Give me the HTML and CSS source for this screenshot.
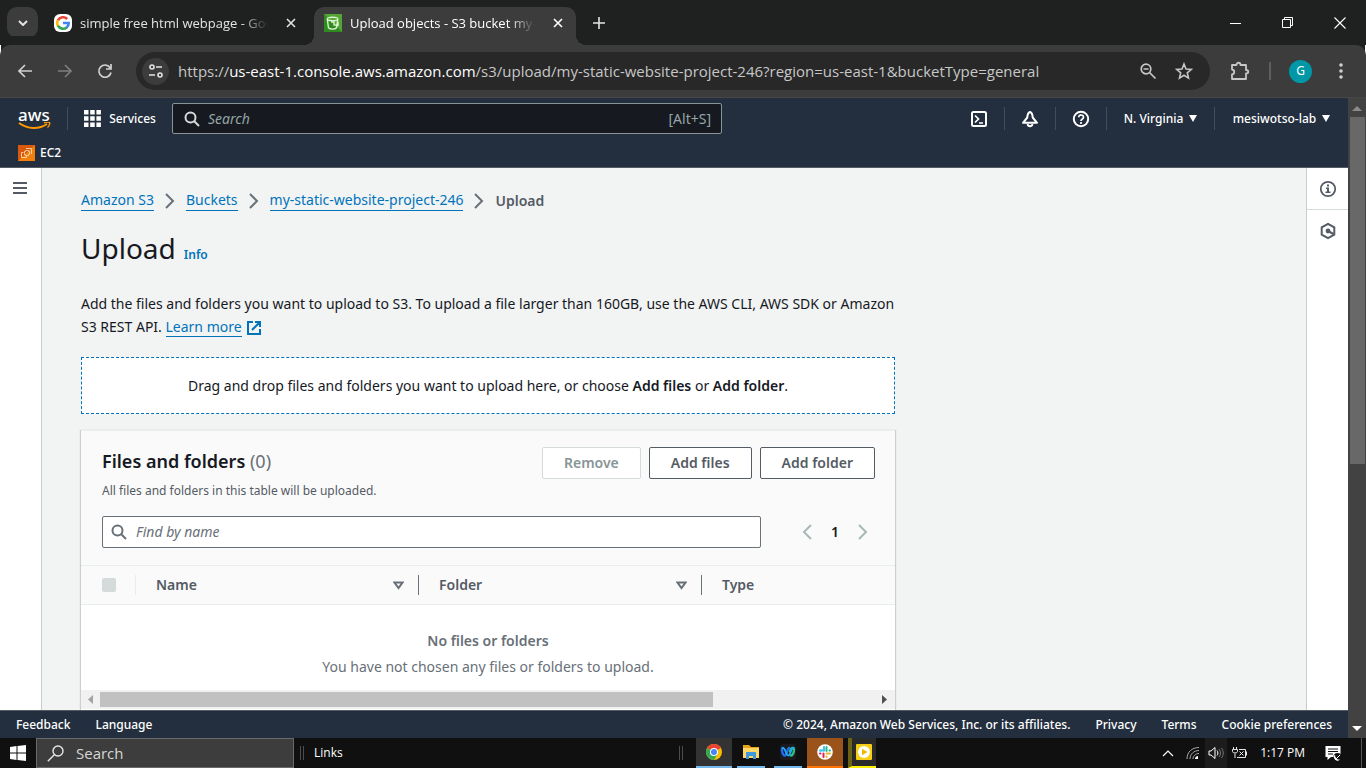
FILE: index.html
```html
<!DOCTYPE html>
<html lang="en">
<head>
<meta charset="utf-8">
<title>Upload objects - S3 bucket my-static-website-project-246</title>
<link rel="stylesheet" href="styles.css">
</head>
<body>
<div class="tabstrip">
  <button class="tab-search" aria-label="Search tabs"><svg width="10" height="6" viewBox="0 0 10 6"><path d="M1 1l4 4 4-4" fill="none" stroke="#e3e3e3" stroke-width="2"/></svg></button>
  <div class="tab">
    <svg width="18" height="18" viewBox="0 0 18 18"><rect width="18" height="18" rx="6" fill="#fff"/><g fill="none" stroke-width="2.6"><path d="M13.200 5A5.800 5.800 0 0 0 3.900 6.300" stroke="#ea4335"/><path d="M3.900 6.200a5.800 5.800 0 0 0 0 5.600" stroke="#fbbc05"/><path d="M3.900 11.700a5.800 5.800 0 0 0 9 1.500" stroke="#34a853"/><path d="M12.700 13.400A5.600 5.600 0 0 0 14.700 9H9" stroke="#4285f4"/></g></svg>
    <span class="tab-title">simple free html webpage - Goo</span>
    <button class="tab-close" aria-label="Close tab"><svg width="10" height="10" viewBox="0 0 10 10"><path d="M1 1l8 8M9 1L1 9" stroke="#e3e3e3" stroke-width="1.6"/></svg></button>
  </div>
  <div class="tab tab-active">
    <svg width="18" height="18" viewBox="0 0 18 18"><path fill="#2f8a1f" d="M0 0h18v18H0z"/><path d="M18 0v18L0 0z" fill="#54a436"/><g fill="none" stroke="#d9f2cf" stroke-width="1.4"><ellipse cx="8.500" cy="5" rx="5.300" ry="1.800"/><path d="M3.300 5.500l1.200 8.300c1.600 1.800 6.600 1.800 8 0L13.800 5.500M7 8h3v3l4 .5M14 8v4"/></g></svg>
    <span class="tab-title">Upload objects - S3 bucket my-</span>
    <button class="tab-close" aria-label="Close tab"><svg width="10" height="10" viewBox="0 0 10 10"><path d="M1 1l8 8M9 1L1 9" stroke="#fff" stroke-width="1.6"/></svg></button>
  </div>
  <button class="new-tab" aria-label="New tab"><svg width="12" height="12" viewBox="0 0 12 12"><path d="M6 0v12M0 6h12" stroke="#e3e3e3" stroke-width="1.6"/></svg></button>
  <div class="window-controls">
    <button aria-label="Minimize"><svg width="12" height="12" viewBox="0 0 12 12"><path d="M0 6.500h11" stroke="#fff"/></svg></button>
    <button aria-label="Restore"><svg width="12" height="12" viewBox="0 0 12 12"><path d="M.5 2.500h8v8h-8zM2.500 2.500v-2h8v8h-2" fill="none" stroke="#fff"/></svg></button>
    <button aria-label="Close"><svg width="12" height="12" viewBox="0 0 12 12"><path d="M.5.500l11 11M11.500.500l-11 11" stroke="#fff" stroke-width="1.1"/></svg></button>
  </div>
</div>

<div class="toolbar">
  <button class="tool" aria-label="Back"><svg width="16" height="16" viewBox="0 0 16 16"><path d="M8 2L2 8l6 6M2 8h13" fill="none" stroke="#d0d0d0" stroke-width="1.7"/></svg></button>
  <button class="tool" aria-label="Forward"><svg width="16" height="16" viewBox="0 0 16 16"><path d="M8 2l6 6-6 6M14 8H1" fill="none" stroke="#7d7d7d" stroke-width="1.7"/></svg></button>
  <button class="tool" aria-label="Reload"><svg width="16" height="16" viewBox="0 0 16 16"><path d="M13.300 5A6.100 6.100 0 1 0 14 9.500M14 1v5H9" fill="none" stroke="#d0d0d0" stroke-width="1.7"/></svg></button>
  <div class="omnibox">
    <button class="site-info" aria-label="Site information"><svg width="16" height="14" viewBox="0 0 16 14"><g fill="none" stroke="#e3e3e3" stroke-width="1.6"><circle cx="4" cy="3" r="2"/><path d="M8 3h6M1 11h6"/><circle cx="12" cy="11" r="2"/></g></svg></button>
    <div class="url">https://<b>us-east-1.console.aws.amazon.com</b>/s3/upload/my-static-website-project-246?region=us-east-1&amp;bucketType=general</div>
    <button aria-label="Zoom"><svg width="18" height="18" viewBox="0 0 18 18"><g fill="none" stroke="#c7c7c7" stroke-width="1.7"><circle cx="7" cy="7" r="4.800"/><path d="M10.500 10.500l6 6M4.500 7h5"/></g></svg></button>
    <button aria-label="Bookmark this tab"><svg width="18" height="18" viewBox="0 0 18 18"><path d="M9 2l2 5 5.300.400-4 3.500 1.200 5.200L9 13.300l-4.500 2.800 1.200-5.200-4-3.500L7 7z" fill="none" stroke="#c7c7c7" stroke-width="1.600"/></svg></button>
  </div>
  <button class="tool extensions" aria-label="Extensions"><svg width="20" height="20" viewBox="0 0 20 20"><path d="M2 4h4.500c0-3 4-3 4 0H16v5c3 0 3 3.500 0 3.500V18H2v-4.500c3-.500 3-4.500 0-5z" fill="none" stroke="#c7c7c7" stroke-width="1.800" stroke-linejoin="round"/></svg></button>
  <span class="tool-rule"></span>
  <button class="avatar" aria-label="Profile">G</button>
  <button class="kebab" aria-label="Chrome menu"><svg width="4" height="16" viewBox="0 0 4 16"><g fill="#d0d0d0"><circle cx="2" cy="2" r="1.800"/><circle cx="2" cy="8" r="1.800"/><circle cx="2" cy="14" r="1.800"/></g></svg></button>
</div>

<div class="viewport">
  <div class="page">
    <header class="aws-nav">
      <div class="nav-row">
        <a class="aws-logo" href="#" aria-label="AWS"><span>aws</span><svg width="34" height="8" viewBox="0 0 34 8"><path d="M1 1c9 6.500 20 6.500 28 1" fill="none" stroke="#ff9900" stroke-width="2"/><path d="M26 .800c3-1 5-.800 5.500-.300.500.600 0 3.500-2 5" fill="none" stroke="#ff9900" stroke-width="1.400"/></svg></a>
        <button class="services"><svg width="17" height="17" viewBox="0 0 17 17"><path fill="#fff" d="M0 0h4.500v4.500H0zM6.200 0h4.500v4.500H6.200zM12.400 0h4.500v4.500h-4.500zM0 6.200h4.500v4.500H0zM6.200 6.200h4.500v4.500H6.200zM12.400 6.200h4.500v4.500h-4.500zM0 12.400h4.500v4.500H0zM6.200 12.400h4.500v4.500H6.200zM12.400 12.400h4.500v4.500h-4.500z"/></svg>Services</button>
        <label class="nav-search"><svg width="16" height="16" viewBox="0 0 16 16"><g fill="none" stroke="#d5dbdb" stroke-width="2"><circle cx="6.500" cy="6.500" r="5"/><path d="M10 10l5 5"/></g></svg><input type="text" placeholder="Search" aria-label="Search"><span>[Alt+S]</span></label>
        <div class="nav-tools">
          <button class="nav-icon" aria-label="CloudShell"><svg width="18" height="18" viewBox="0 0 18 18"><g fill="none" stroke="#fff" stroke-width="2"><rect x="2" y="2" width="14" height="14" rx="1.500"/><path d="M5 5.500L8.500 9 5 12.500M9 13h4" stroke-width="1.700"/></g></svg></button>
          <button class="nav-icon" aria-label="Notifications"><svg width="18" height="18" viewBox="0 0 18 18"><path d="M9 2C7.500 2.500 6.500 4 6.300 7.500L2 12.800h14L11.700 7.500C11.500 4 10.500 2.500 9 2z" fill="none" stroke="#fff" stroke-width="2" stroke-linejoin="round"/><path d="M6.500 14c.500 3 4.500 3 5 0" fill="none" stroke="#fff" stroke-width="1.800"/></svg></button>
          <button class="nav-icon" aria-label="Help"><svg width="18" height="18" viewBox="0 0 18 18"><g fill="none" stroke="#fff" stroke-width="2"><circle cx="9" cy="9" r="7.200"/><path d="M6.700 7.300c0-3.200 4.800-3 4.800 0C11.500 9 9 9 9 11M9 12v2" stroke-width="1.700"/></g></svg></button>
          <button class="nav-menu region">N. Virginia<svg width="8" height="7" viewBox="0 0 8 7"><path d="M0 0h8L4 7z" fill="#fff"/></svg></button>
          <button class="nav-menu account">mesiwotso-lab<svg width="8" height="7" viewBox="0 0 8 7"><path d="M0 0h8L4 7z" fill="#fff"/></svg></button>
        </div>
      </div>
      <a class="favorite" href="#"><svg width="17" height="16" viewBox="0 0 17 16"><path fill="#d8590d" d="M0 0h17v16H0z"/><path fill="#f07f0c" d="M17 0v16L0 16z"/><g fill="none" stroke="#ffe4c4"><rect x="6.500" y="5.500" width="5" height="5" rx="2"/><path d="M5.500 7.500h-2v5h5v-1.500M8 3.500h5.500V9" stroke-width=".8"/></g></svg>EC2</a>
    </header>

    <div class="workspace">
      <aside class="rail-left"><button aria-label="Open navigation"><svg width="15" height="13" viewBox="0 0 15 13"><path d="M0 1h14M0 6h14M0 11h14" stroke="#545b64" stroke-width="2"/></svg></button></aside>
      <main class="content">
        <div class="column">
          <nav class="breadcrumbs" aria-label="Breadcrumbs">
            <a href="#">Amazon S3</a><svg width="10" height="16" viewBox="0 0 10 16"><path d="M1 1l7 7-7 7" fill="none" stroke="#687078" stroke-width="2"/></svg>
            <a href="#">Buckets</a><svg width="10" height="16" viewBox="0 0 10 16"><path d="M1 1l7 7-7 7" fill="none" stroke="#687078" stroke-width="2"/></svg>
            <a href="#">my-static-website-project-246</a><svg width="10" height="16" viewBox="0 0 10 16"><path d="M1 1l7 7-7 7" fill="none" stroke="#687078" stroke-width="2"/></svg>
            <span>Upload</span>
          </nav>
          <div class="title"><h1>Upload</h1><a href="#">Info</a></div>
          <p class="intro">Add the files and folders you want to upload to S3. To upload a file larger than 160GB, use the AWS CLI, AWS SDK or Amazon S3 REST API. <a href="#"><span>Learn more</span><svg width="16" height="16" viewBox="0 0 16 16"><path d="M7 2H2v12h12V9M9 2h5v5M14 2L6 10" fill="none" stroke="#0073bb" stroke-width="2"/></svg></a></p>
          <div class="dropzone">Drag and drop files and folders you want to upload here, or choose <b>Add files</b> or <b>Add folder</b>.</div>

          <section class="panel">
            <div class="panel-head">
              <div class="panel-title">
                <div>
                  <h2>Files and folders <span>(0)</span></h2>
                  <p>All files and folders in this table will be uploaded.</p>
                </div>
                <div class="actions">
                  <button disabled>Remove</button><button>Add files</button><button>Add folder</button>
                </div>
              </div>
              <div class="filter-row">
                <label class="filter"><svg width="16" height="16" viewBox="0 0 16 16"><g fill="none" stroke="#687078" stroke-width="2"><circle cx="6.500" cy="6.500" r="5"/><path d="M10 10l5 5"/></g></svg><input type="text" placeholder="Find by name" aria-label="Find by name"></label>
                <div class="pager">
                  <button aria-label="Previous page"><svg width="10" height="16" viewBox="0 0 10 16"><path d="M9 1L2 8l7 7" fill="none" stroke="#aab7b8" stroke-width="2"/></svg></button>
                  <button class="current">1</button>
                  <button aria-label="Next page"><svg width="10" height="16" viewBox="0 0 10 16"><path d="M1 1l7 7-7 7" fill="none" stroke="#aab7b8" stroke-width="2"/></svg></button>
                </div>
              </div>
            </div>
            <table>
              <thead><tr>
                <th class="select-col"><div><input type="checkbox" disabled aria-label="Select all"></div></th>
                <th class="sort-col"><div>Name<svg width="11" height="9" viewBox="0 0 11 9"><path d="M1.500 1.500h8l-4 5.500z" fill="none" stroke="#687078" stroke-width="2"/></svg></div></th>
                <th class="sort-col"><div>Folder<svg width="11" height="9" viewBox="0 0 11 9"><path d="M1.500 1.500h8l-4 5.500z" fill="none" stroke="#687078" stroke-width="2"/></svg></div></th>
                <th><div>Type</div></th>
              </tr></thead>
              <tbody><tr><td colspan="4"><b>No files or folders</b><p>You have not chosen any files or folders to upload.</p></td></tr></tbody>
            </table>
            <div class="hscroll"><svg width="6" height="9" viewBox="0 0 6 9"><path d="M5 0v9L0 4.500z" fill="#a3a3a3"/></svg><div class="hscroll-track"><div class="hscroll-thumb"></div></div><svg width="6" height="9" viewBox="0 0 6 9"><path d="M0 0v9l5-4.500z" fill="#505050"/></svg></div>
          </section>
        </div>
      </main>
      <aside class="rail-right">
        <button aria-label="Info panel"><svg width="18" height="18" viewBox="0 0 18 18"><circle cx="9" cy="9" r="7.200" fill="none" stroke="#545b64" stroke-width="1.800"/><path d="M8 4.500h2v2H8zM7 7.500h3v4h1.500V13h-5v-1.500H8V9H7z" fill="#545b64"/></svg></button>
        <button aria-label="Tutorials"><svg width="18" height="18" viewBox="0 0 18 18"><path d="M9 1.800l6.300 3.500v7.400L9 16.200l-6.300-3.500V5.300z" fill="none" stroke="#545b64" stroke-width="2"/><circle cx="9" cy="9" r="2.400" fill="#545b64"/><path d="M9 9l5.500 3" stroke="#545b64" stroke-width="2"/></svg></button>
      </aside>
    </div>

    <footer class="aws-footer">
      <a href="#">Feedback</a><a href="#">Language</a>
      <span class="copyright">© 2024, Amazon Web Services, Inc. or its affiliates.</span>
      <a href="#">Privacy</a><a href="#">Terms</a><a href="#">Cookie preferences</a>
    </footer>
  </div>
  <div class="vscroll"><svg width="10" height="6" viewBox="0 0 10 6"><path d="M0 5l5-5 5 5z" fill="#8b8b8b"/></svg><div class="vscroll-track"><div class="vscroll-thumb"></div></div><svg width="10" height="6" viewBox="0 0 10 6"><path d="M0 0l5 5 5-5z" fill="#fff"/></svg></div>
</div>

<div class="taskbar">
  <button class="start" aria-label="Start"><svg width="16" height="16" viewBox="0 0 16 16"><path fill="#fff" d="M0 2l6.500-1v6.500H0zM7.500.900L16 0v7.500H7.500zM0 8.500h6.500V15L0 14zM7.500 8.500H16V16l-8.500-1z"/></svg></button>
  <label class="task-search"><svg width="17" height="17" viewBox="0 0 17 17"><g fill="none" stroke="#e6e6e6" stroke-width="1.400"><circle cx="11" cy="6" r="5"/><path d="M7.300 9.700L.800 16.200"/></g></svg><input type="text" placeholder="Search" aria-label="Search Windows"></label>
  <span class="grip"></span><span class="links">Links</span>
  <span class="grip grip-apps"></span>
  <div class="apps">
    <button class="app app-open" aria-label="Google Chrome"><svg width="16" height="16" viewBox="0 0 16 16"><circle cx="8" cy="8" r="8" fill="#fbbc05"/><path d="M8 8L1.100 4A8 8 0 0 1 14.900 4z" fill="#ea4335"/><path d="M8 8L1.100 4A8 8 0 0 0 8 16l3.500-6z" fill="#34a853"/><circle cx="8" cy="8" r="4" fill="#fff"/><circle cx="8" cy="8" r="3" fill="#4285f4"/></svg></button>
    <button class="app" aria-label="File Explorer"><svg width="16" height="16" viewBox="0 0 16 16"><path d="M0 1h6l2 2h8v11H0z" fill="#e8a317"/><path d="M0 4h16v10H0z" fill="#ffd766"/><path d="M3 8h10v7h-3v-3H6v3H3z" fill="#3f97dd"/></svg></button>
    <button class="app" aria-label="Webex"><svg width="16" height="16" viewBox="0 0 16 16"><rect width="16" height="16" rx="3" fill="#1b1b1f"/><g fill="none" stroke-width="2.400" stroke-linecap="round"><path d="M11 11.500c2.500 0 4-7 2-7.500-2-.500-2.500 1.500-3 3.500" stroke="#2ebd85"/><path d="M2.500 4C1 6 3 12 5 11.500s2.500-7.500 4-7.500" stroke="#1f6df2"/><path d="M2.500 4c3-1 3 7.500 6 7.500 2.500 0 2-7.500 5-7.500" stroke="#22a8ee" stroke-width="1.800"/></g></svg></button>
    <button class="app app-slack" aria-label="Slack"><svg width="16" height="16" viewBox="0 0 16 16"><circle cx="8" cy="8" r="7.800" fill="#fff"/><g stroke-width="2" stroke-linecap="round"><path d="M7 3v3.500M3.500 6.500H4" stroke="#36c5f0"/><path d="M3 6.500h4" stroke="#36c5f0"/><path d="M9.500 3v4M12.500 6.500h.500" stroke="#2eb67d"/><path d="M9.500 9.500h3.500M9.500 12.500v.500" stroke="#ecb22e"/><path d="M6.500 9.500V13M3 9.500h.500" stroke="#e01e5a"/></g></svg></button>
    <button class="app app-player" aria-label="Media player"><svg width="16" height="16" viewBox="0 0 16 16"><rect width="16" height="16" rx="1" fill="#f6cf13"/><circle cx="8" cy="8" r="6" fill="#fff"/><path d="M6 4.800L11.500 8 6 11.200z" fill="#e9bc00"/></svg></button>
  </div>
  <div class="tray">
    <button aria-label="Show hidden icons"><svg width="12" height="8" viewBox="0 0 12 8"><path d="M1 7l5-5 5 5" fill="none" stroke="#fff" stroke-width="1.200"/></svg></button>
    <button aria-label="Network"><svg width="14" height="14" viewBox="0 0 14 14"><g fill="none" stroke="#aaa"><path d="M1 13C1 6 6 1.500 13 1.500M4 13c0-5 4-8.500 9-8.500M7 13c0-3 2.500-5.500 6-5.500" /></g><path d="M9 13c0-1.800 1.500-3 3-3v3z" fill="#fff"/></svg></button>
    <button class="volume" aria-label="Volume"><svg width="16" height="14" viewBox="0 0 16 14"><path d="M1 5h2l4-3.500v11L3 9H1z" fill="none" stroke="#fff"/><path d="M9 4.500c1.200 1.500 1.200 3.500 0 5" fill="none" stroke="#fff"/><path d="M11 3c2 2.500 2 5.500 0 8M13.500 2c2.300 3 2.300 7 0 10" fill="none" stroke="#777"/></svg></button>
    <button aria-label="Power"><svg width="16" height="14" viewBox="0 0 16 14"><g fill="none" stroke="#e6e6e6"><path d="M1.500 1v2M4.500 1v2M.500 3.500h5v2c0 2-5 2-5 0zM3 7.500V12M5 11.500h8.500v-8H7M14.500 5.500v4M7.500 5.500l4 4M11.500 5.500l-4 4"/></g></svg></button>
    <span class="clock">1:17 PM</span>
    <button aria-label="Notifications"><svg width="17" height="17" viewBox="0 0 17 17"><path d="M.500 1h15v11H6l-3.500 3v-3h-2z" fill="#fff"/><path d="M3 4h10M3 6.500h10M3 9h5" stroke="#111"/><circle cx="12.500" cy="12" r="4" fill="#111"/><path d="M10 9.500a3.500 3.500 0 1 0 5 5c-3 .500-5-2-5-5z" fill="#fff"/><path d="M10 15l5-5" stroke="#fff"/></svg></button>
    <span class="desktop-edge"></span>
  </div>
</div>
</body>
</html>
```
FILE: styles.css
```css
*{box-sizing:border-box}
body{margin:0;height:100vh;display:flex;flex-direction:column;overflow:hidden;font-family:"Noto Sans","Open Sans",sans-serif;font-size:14px;line-height:20px;color:#16191f}
button{border:0;padding:0;margin:0;background:none;font:inherit;color:inherit;display:flex;align-items:center;justify-content:center}
input{font:inherit;margin:0}
svg{display:block;flex:none}
a{color:#0073bb}
h1,h2,p{margin:0;font-weight:400}

.tabstrip{flex:none;height:45px;display:flex;align-items:stretch;background:#1f2120;color:#e3e3e3;font-family:"Open Sans",sans-serif;font-size:13px;padding-left:7px}
.tab-search{width:31px;height:31px;margin:7px 6px 0 0;border-radius:10px;background:#3c3c3c}
.tab{flex:0 1 262px;display:flex;align-items:center;padding:0 4px 6px 10px;gap:8px;min-width:0;margin:7px 0 0}
.tab-title{flex:1;min-width:0;overflow:hidden;white-space:nowrap;-webkit-mask-image:linear-gradient(90deg,#000 84%,transparent 98%);mask-image:linear-gradient(90deg,#000 84%,transparent 98%)}
.tab-close{width:22px;height:24px}
.tab-active{position:relative;margin-left:8px;padding-right:7px;background:#3c3c3c;border-radius:10px 10px 0 0;color:#fff}
.tab-active::before,.tab-active::after{content:"";position:absolute;bottom:0;width:10px;height:10px}
.tab-active::before{left:-10px;background:radial-gradient(circle at 0 0,transparent 10px,#3c3c3c 10px)}
.tab-active::after{right:-10px;background:radial-gradient(circle at 100% 0,transparent 10px,#3c3c3c 10px)}
.new-tab{width:46px}
.window-controls{margin-left:auto;display:flex}
.window-controls button{width:52px}

.toolbar{flex:none;height:53px;display:flex;align-items:center;background:#3c3c3c;border-bottom:1px solid #474747;border-radius:10px 10px 0 0;padding:0 23px 0 5px;box-shadow:0 -10px 0 -1px #1f2120}
.tool{width:40px;height:36px}
.omnibox{flex:1;min-width:0;height:38px;margin-left:11px;display:flex;align-items:center;border-radius:19px;background:#282828;padding:0 8px 0 6px}
.omnibox>button{width:36px;height:32px}
.omnibox>.site-info{width:27px;height:27px;border-radius:50%;background:#3c3c3c}
.url{flex:1;min-width:0;margin-left:9px;overflow:hidden;white-space:nowrap;font-family:"Open Sans",sans-serif;font-size:15px;color:#c7c7c7}
.url b{font-weight:400;color:#fff}
.extensions{margin-left:10px}
.tool-rule{width:2px;height:18px;margin-left:9px;background:#5e5e5e}
.avatar{width:23px;height:23px;margin-left:18px;border-radius:50%;background:#0097a7;color:#fff;font-size:12px}
.kebab{margin-left:27px}

.viewport{flex:1;min-height:0;display:flex}
.page{flex:1;min-width:0;display:flex;flex-direction:column}
.aws-nav{flex:none;height:70px;background:#232f3e;border-bottom:1px solid #545b64;color:#fff;font-weight:500;font-size:12px}
.nav-row{display:flex;height:41px;align-items:center}
.aws-logo{width:68px;height:23px;padding-left:18px;border-right:1px solid #414d5c;color:#fff;text-decoration:none;font-size:17px;line-height:14px;display:flex;flex-direction:column;justify-content:center}
.services{width:104px;gap:8px}
.nav-search{flex:0 1 550px;min-width:0;height:31px;display:flex;align-items:center;background:#16191f;border:1px solid #879596;border-radius:2px;padding:0 10px 0 11px;gap:8px;font-size:14px;font-weight:400;color:#95a5a6}
.nav-search input{flex:1;min-width:0;padding:0;border:0;outline:0;background:none;color:#fff}
.nav-search input::placeholder{font-style:italic;color:#95a5a6}
.nav-tools{margin-left:auto;display:flex}
.nav-tools button{height:23px}
.nav-tools button+button{border-left:1px solid #414d5c}
.nav-icon{width:51px}
.nav-menu{gap:6px}
.region{width:108px}
.account{width:134px}
.favorite{display:inline-flex;align-items:center;gap:5px;height:28px;padding-left:18px;color:#fff;text-decoration:none}

.workspace{flex:1;min-height:0;display:flex}
.rail-left{flex:none;width:42px;background:#fff;border-right:1px solid #c4cccc}
.rail-left button{width:41px;height:41px}
.content{flex:1;min-width:0;overflow:hidden;background:#f2f3f3;padding:22px 39px 0}
.column{max-width:814px}
.breadcrumbs{display:flex;align-items:center;gap:11px;height:21px}
.breadcrumbs a,.intro a span{text-decoration:none;border-bottom:1px solid #0073bb}
.breadcrumbs span{color:#545b64;font-weight:600}
.title{display:flex;align-items:baseline;gap:8px;margin-top:17px}
.title h1{font-size:28px;line-height:40px}
.title a{font-size:12px;font-weight:600;text-decoration:none}
.intro{margin-top:24px;line-height:23px}
.intro a{display:inline-flex;align-items:center;gap:4px;line-height:18px;text-decoration:none}
.dropzone{margin-top:19px;border:1px dashed #0073bb;background:#fff;height:57px;display:flex;align-items:center;justify-content:center;white-space:pre-wrap}
.dropzone b,.panel b{font-weight:600}
.panel{margin-top:16px;background:#fff;border-top:1px solid #eaeded;box-shadow:0 1px 1px 1px #c9d0d0}
.panel-head{background:#fafafa;padding:16px 20px 17px 21px}
.panel-title{display:flex;justify-content:space-between;align-items:flex-start}
.panel h2{font-size:18px;line-height:28px;font-weight:600}
.panel h2 span{font-weight:400;color:#687078}
.panel-title p{font-size:12px;line-height:18px;margin-top:7px;color:#545b64}
.actions{display:flex;gap:8px}
.actions button{height:32px;padding:0 21px;border:1px solid #545b64;border-radius:2px;background:#fff;color:#545b64;font-weight:600}
.actions button:disabled{border-color:#d5dbdb;color:#879596}
.filter-row{display:flex;align-items:center;justify-content:space-between;margin-top:16px}
.filter{flex:0 1 659px;min-width:0;display:flex;align-items:center;height:32px;gap:9px;padding:0 8px;border:1px solid #687078;border-radius:2px;background:#fff}
.filter input{flex:1;min-width:0;padding:0;border:0;outline:0;background:none}
.filter input::placeholder{font-style:italic;color:#687078}
.pager{display:flex;align-items:center}
.pager button{width:24px;height:32px}
.pager .current{width:32px;font-weight:600}
table{width:100%;table-layout:fixed;border-collapse:collapse}
th{height:39px;padding:0;background:#fafafa;border-top:1px solid #eaeded;border-bottom:1px solid #eaeded;color:#545b64;font-weight:600;text-align:left}
th>div{display:flex;align-items:center;justify-content:space-between;height:20px;padding-left:20px}
.select-col{width:55px}
.select-col>div{padding-left:21px;border-right:1px solid #eaeded}
.sort-col{width:283px}
.sort-col>div{padding-right:14px;border-right:1px solid #687078}
th input{appearance:none;width:14px;height:14px;border-radius:2px;background:#d5dbdb}
td{padding:26px 20px 13px;text-align:center;color:#687078}
td p{line-height:20px;margin-top:6px}
.hscroll{display:flex;align-items:center;height:20px;padding:0 7px;background:#f1f1f1;gap:6px;border-bottom:1px solid #fff}
.hscroll-track{flex:1}
.hscroll-thumb{width:79%;height:15px;background:#c1c1c1}
.rail-right{flex:none;width:42px;background:#fff;border-left:1px solid #c4cccc}
.rail-right button{width:41px;height:42px}
.rail-right button:first-child{border-bottom:1px solid #d5dbdb}
.aws-footer{flex:none;height:28px;display:flex;align-items:center;gap:25px;padding:0 16px;background:#232f3e;border-top:1px solid #545b64;color:#fff;font-size:12px;font-weight:500;white-space:nowrap}
.aws-footer a{color:#fff;text-decoration:none}
.copyright{margin-left:auto}
.vscroll{flex:none;width:18px;background:#424242;display:flex;flex-direction:column;align-items:center;padding:8px 0 6px;gap:5px}
.vscroll-track{flex:1;width:15px}
.vscroll-thumb{height:57.5%;background:#686868}

.taskbar{flex:none;height:30px;display:flex;align-items:stretch;background:#101010;color:#fff;font-family:"Open Sans",sans-serif;font-size:12px}
.start{width:36px}
.task-search{width:258px;display:flex;align-items:center;gap:10px;padding:0 10px;background:#3d3d3d;border:1px solid #6a6a6a;font-size:15px}
.task-search input{width:100%;min-width:0;border:0;outline:0;background:none;color:#fff}
.task-search input::placeholder{color:#d6d6d6}
.grip{width:4px;height:14px;margin:8px 0 0 6px;border:solid #4c4c4c;border-width:0 1px}
.links{margin-left:10px;line-height:30px}
.grip-apps{margin-left:auto;margin-right:13px}
.apps{display:flex}
.app{width:28px;margin-right:9px;border-bottom:2px solid #76b9ed}
.app:nth-child(3){margin-right:5px}
.app-open{width:36px;margin-right:5px;background:#333}
.app-slack{width:36px;margin-right:5px;background:#9a531b;border-color:#ff7300}
.app-player{margin-right:0;background:#2a2a2a;border-bottom-color:#fff100;border-left:4px solid #6b6313}
.tray{display:flex;align-items:center;margin-left:279px}
.tray button{width:25px;height:30px}
.tray .volume{width:22px;background:#1c1c1c}
.clock{margin:0 16px 0 8px;white-space:nowrap}
.desktop-edge{width:5px;height:30px;margin-left:15px;border-left:1px solid #555}
```
